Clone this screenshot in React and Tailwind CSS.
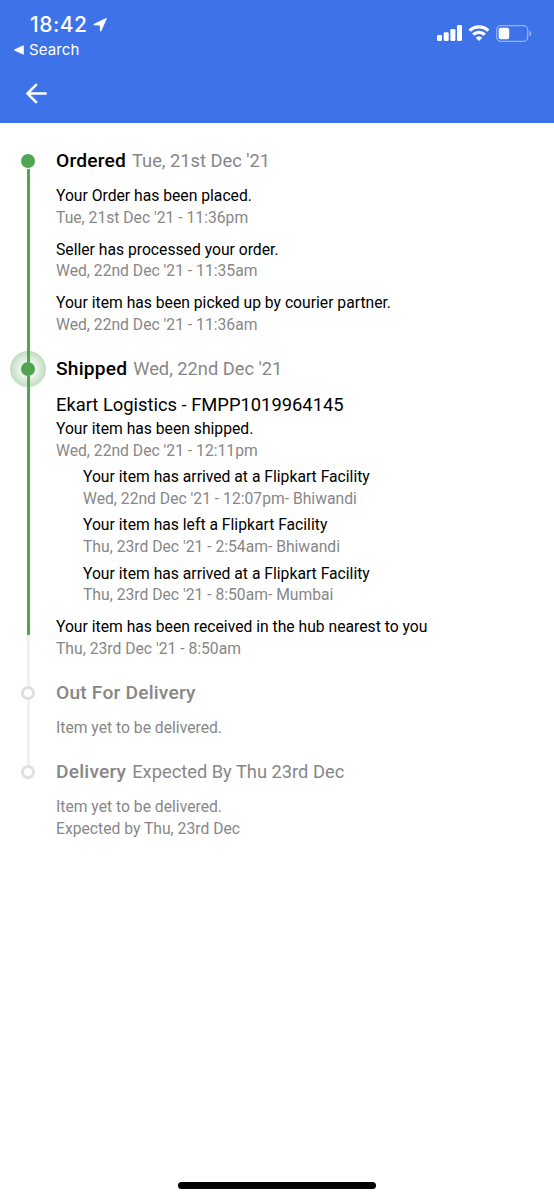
import React from 'react';
import clsx from 'clsx';

const steps = [
  {
    title: 'Ordered',
    date: "Tue, 21st Dec '21",
    done: true,
    height: 'h-[208px]',
    events: [
      { text: 'Your Order has been placed.', time: "Tue, 21st Dec '21 - 11:36pm" },
      { text: 'Seller has processed your order.', time: "Wed, 22nd Dec '21 - 11:35am" },
      { text: 'Your item has been picked up by courier partner.', time: "Wed, 22nd Dec '21 - 11:36am" },
    ],
  },
  {
    title: 'Shipped',
    date: "Wed, 22nd Dec '21",
    done: true,
    current: true,
    height: 'h-[324px]',
    courier: 'Ekart Logistics - FMPP1019964145',
    events: [
      {
        text: 'Your item has been shipped.',
        time: "Wed, 22nd Dec '21 - 12:11pm",
        stops: [
          { text: 'Your item has arrived at a Flipkart Facility', time: "Wed, 22nd Dec '21 - 12:07pm- Bhiwandi" },
          { text: 'Your item has left a Flipkart Facility', time: "Thu, 23rd Dec '21 - 2:54am- Bhiwandi" },
          { text: 'Your item has arrived at a Flipkart Facility', time: "Thu, 23rd Dec '21 - 8:50am- Mumbai" },
        ],
      },
      { text: 'Your item has been received in the hub nearest to you', time: "Thu, 23rd Dec '21 - 8:50am" },
    ],
  },
  {
    title: 'Out For Delivery',
    height: 'h-[79px]',
    events: [{ time: 'Item yet to be delivered.' }],
  },
  {
    title: 'Delivery',
    date: 'Expected By Thu 23rd Dec',
    height: 'h-[90px]',
    events: [{ time: 'Item yet to be delivered.' }, { time: 'Expected by Thu, 23rd Dec' }],
  },
];

const StatusBar = () => (
  <div className="flex h-[62px] justify-between font-['Inter',sans-serif]">
    <div className="pl-[14px] pt-[12px]">
      <div className="flex items-center pl-[16px]">
        <span className="w-[60px] text-[21px] leading-[25px] font-medium tracking-[0.5px] whitespace-nowrap">18:42</span>
        <svg className="ml-[3px] h-[14px] w-[14px]" viewBox="0 0 15 15" fill="currentColor">
          <path d="M14.7 1.1 8.9 13.9c-.4.9-1.500.7-1.500-.3V8.1L1.6 7.9C.3 7.8.2 6.5 1.2 6.1L13.7.3c.8-.3 1.300.1 1 .8Z" />
        </svg>
      </div>
      <div className="mt-[3px] flex items-center">
        <svg className="h-[10px] w-[10px]" viewBox="0 0 10 10" fill="currentColor">
          <path d="M.4 4.5 8.800.5Q9.800.2 9.8 1.1V8.9Q9.8 9.8 8.8 9.5L.4 5.5Q-.3 5 .4 4.5Z" />
        </svg>
        <span className="ml-[5px] text-[15px] leading-[20px] tracking-[0.1px]">Search</span>
      </div>
    </div>
    <div className="mt-[25px] mr-[22px] flex h-[16px]">
      <svg className="h-[16px] w-[26px]" viewBox="0 0 26 16" fill="currentColor">
        <rect x="0" y="10" width="5" height="6" rx="1.2" />
        <rect x="6.7" y="7.2" width="5" height="8.8" rx="1.2" />
        <rect x="13.4" y="4" width="5" height="12" rx="1.2" />
        <rect x="20" y="0" width="5" height="16" rx="1.2" />
      </svg>
      <svg className="ml-[5px] h-[16px] w-[22px]" viewBox="0 0 22 16" fill="none" stroke="currentColor" strokeWidth="3.2">
        <path d="M1.6 5.6a13.5 13.5 0 0 1 18.8 0" />
        <path d="M5.2 9.7a8.3 8.3 0 0 1 11.6 0" />
        <path d="M7.7 12.7a4.8 4.8 0 0 1 6.6 0L11 16Z" fill="currentColor" stroke="none" />
      </svg>
      <svg className="ml-[6px] h-[17px] w-[36px]" viewBox="0 0 36 17" fill="none">
        <rect x=".7" y=".7" width="31" height="15.6" rx="4" stroke="#fff" strokeOpacity=".45" strokeWidth="1.3" />
        <rect x="2.7" y="2.7" width="10.5" height="11.6" rx="2" fill="#fff" />
        <path d="M33.5 5.7v5.6c2.2-.8 2.2-4.8 0-5.6Z" fill="#fff" fillOpacity=".5" />
      </svg>
    </div>
  </div>
);

const Event = ({ text, time }) => (
  <div className="text-[15.7px] leading-[21.5px]">
    {text && <p className="text-black">{text}</p>}
    <p className="text-[#878787]">{time}</p>
  </div>
);

const Rail = ({ step, index }) => (
  <div className="relative flex w-[56px] shrink-0 flex-col items-center">
    {step.current && (
      <span className="absolute top-[-7px] left-[10px] h-[36px] w-[36px] rounded-full bg-[radial-gradient(circle,#f6faf6_20%,#c0dcbf_72%)]" />
    )}
    <span className={clsx('relative h-[4px] w-[3px]', index === 0 ? 'bg-transparent' : step.done ? 'bg-[#51a551]' : 'bg-[#f0f0f0]')} />
    {step.current && <span className="absolute -top-[7px] h-[11px] w-[3px] bg-[#51a551]" />}
    {step.done ? (
      <span className="relative h-[14px] w-[14px] shrink-0 rounded-full bg-[#51a551]" />
    ) : (
      <span className="h-[14px] w-[14px] shrink-0 rounded-full border-[3px] border-[#e0e0e0] bg-white" />
    )}
    {step.current ? (
      <>
        <span className="relative h-[259px] w-[3px] bg-[#51a551]" />
        <span className="w-[3px] flex-1 bg-[#f0f0f0]" />
      </>
    ) : step.done ? (
      <span className="mt-px w-[3px] flex-1 bg-[#51a551]" />
    ) : (
      <span className={clsx('w-[3px] bg-[#f0f0f0]', index < steps.length - 1 ? 'flex-1' : 'h-px')} />
    )}
  </div>
);

const Step = ({ step, index }) => (
  <div className={clsx('flex', step.height)}>
    <Rail step={step} index={index} />
    <div className="whitespace-nowrap">
      <h2 className="flex h-[23px] items-baseline gap-[6px] text-[18.3px] leading-[21.5px] text-[#878787]">
        <span className={clsx('text-[19.2px] font-medium tracking-[0.2px]', step.done && 'text-black')}>{step.title}</span>
        {step.date && <span>{step.date}</span>}
      </h2>
      {step.courier && <p className="mt-[13px] -mb-[10.3px] text-[18.35px] leading-[22px] text-black">{step.courier}</p>}
      <div className={clsx('mt-[12.3px] flex flex-col', step.done && 'gap-[10.5px]')}>
        {step.events.map((event, i) => (
          <div key={i}>
            <Event {...event} />
            {event.stops && (
              <div className="mt-[5.3px] flex flex-col gap-[5.2px] pl-[27px]">
                {event.stops.map((stop, j) => (
                  <Event key={j} {...stop} />
                ))}
              </div>
            )}
          </div>
        ))}
      </div>
    </div>
  </div>
);

const App = () => (
  <div className="flex h-[1200px] w-[554px] flex-col overflow-hidden bg-white font-['Roboto',sans-serif]">
    <header className="h-[123px] shrink-0 bg-[#3d72e8] text-white">
      <StatusBar />
      <button className="ml-[25px] mt-[20px] block" aria-label="Back">
        <svg className="h-[23px] w-[22px]" viewBox="0 0 22 23" fill="none" stroke="currentColor" strokeWidth="2.6">
          <path d="M11.8 2.2 2.5 11.5l9.3 9.3M2.5 11.5H21.7" />
        </svg>
      </button>
    </header>

    <main className="flex-1 pt-[27px]">
      {steps.map((step, index) => (
        <Step key={step.title} step={step} index={index} />
      ))}
    </main>

    <div className="mx-auto mb-[11px] h-[7px] w-[198px] rounded-full bg-black" />
  </div>
);

export default App;
